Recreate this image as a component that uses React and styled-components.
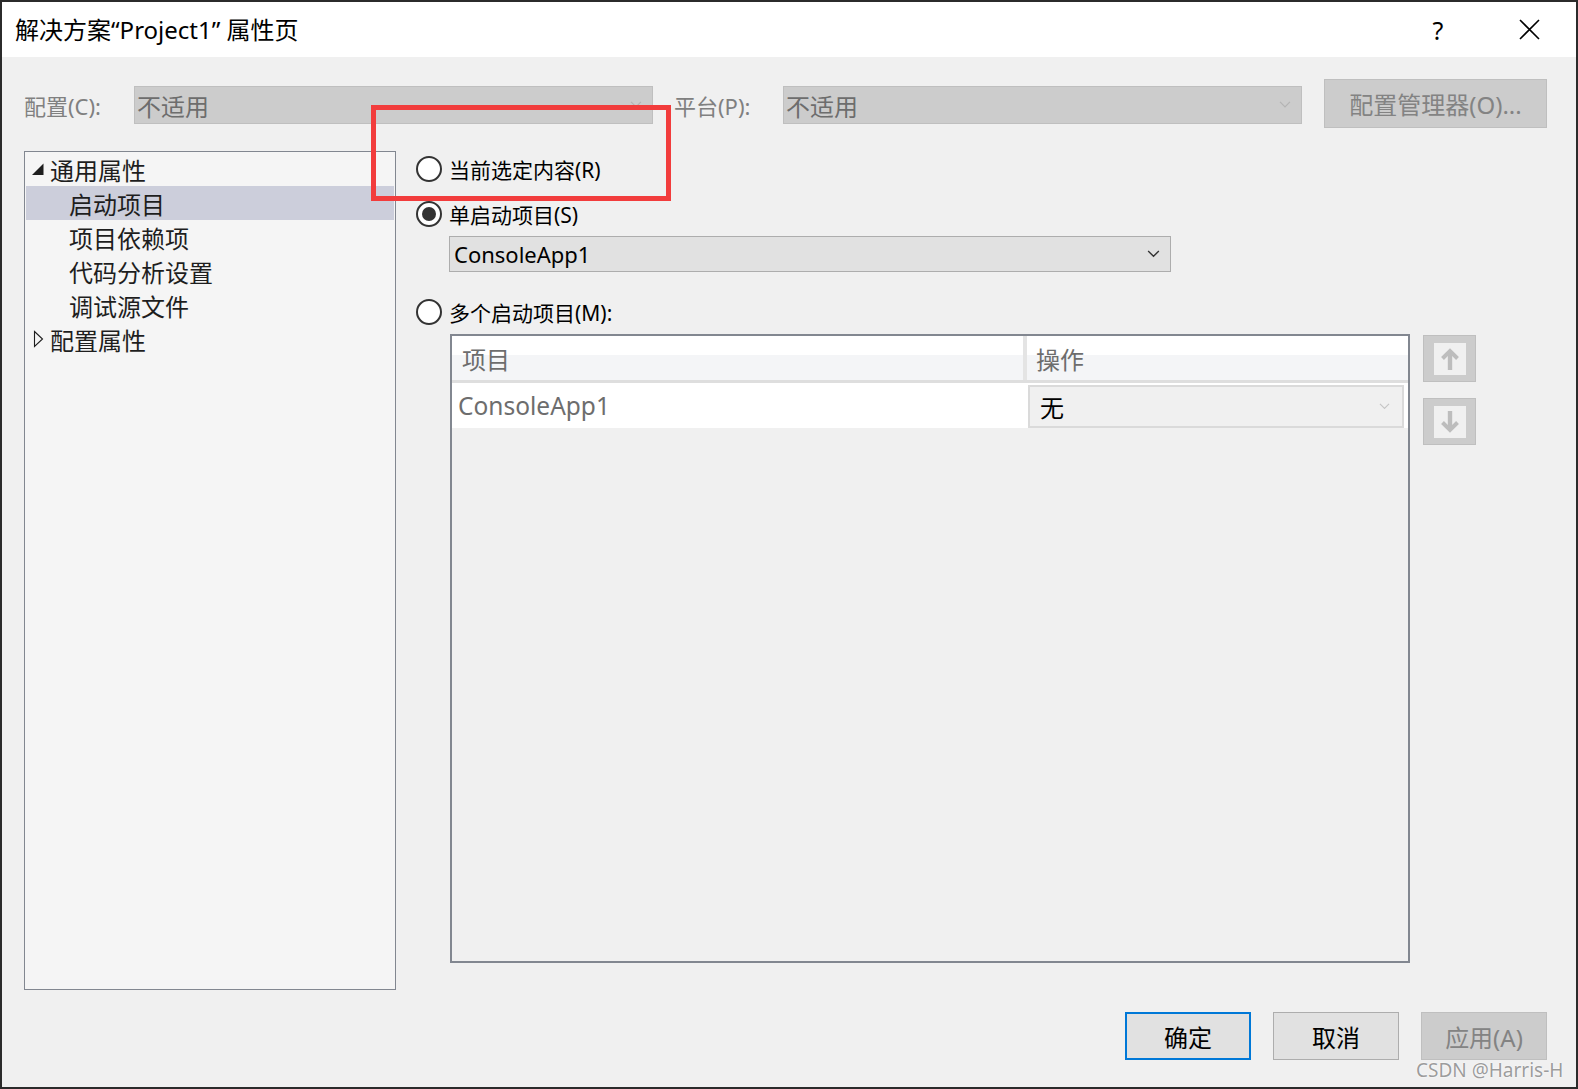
import React from 'react';
import styled, { createGlobalStyle } from 'styled-components';

const GlobalStyle = createGlobalStyle`
  html, body {
    margin: 0;
    padding: 0;
    background: #1f1f1f;
  }
  body {
    font-family: "Noto Sans", "Noto Sans CJK SC", sans-serif;
  }
  * {
    box-sizing: border-box;
  }
`;

const Window = styled.div`
  position: relative;
  width: 1578px;
  height: 1089px;
  border: 2px solid #2b2b2b;
  background: #f0f0f0;
  display: flex;
  flex-direction: column;
  overflow: hidden;
`;

const TitleBar = styled.div`
  height: 55px;
  flex-shrink: 0;
  background: #ffffff;
  display: flex;
  align-items: center;
  padding: 0 17px 0 13px;
`;

const TitleText = styled.div`
  font-size: 24px;
  line-height: 1;
  color: #000;
`;

const TitleActions = styled.div`
  margin-left: auto;
  display: flex;
  gap: 31px;
`;

const TitleAction = styled.div`
  width: 60px;
  height: 55px;
  display: flex;
  align-items: center;
  justify-content: center;
  font-size: 25px;
  color: #000;
`;

const Body = styled.div`
  flex: 1;
  display: flex;
  flex-direction: column;
  padding: 22px 29px 27px 22px;
`;

const Toolbar = styled.div`
  height: 49px;
  display: flex;
  align-items: flex-start;
`;

const FieldLabel = styled.div`
  width: ${p => p.$width}px;
  height: 38px;
  margin-top: 7px;
  margin-left: ${p => p.$gap || 0}px;
  display: flex;
  align-items: center;
  font-size: 22px;
  color: #808080;
`;

const ComboBox = styled.div`
  width: ${p => p.$width}px;
  height: ${p => p.$height}px;
  margin-top: ${p => p.$top || 0}px;
  margin-left: ${p => p.$left || 0}px;
  display: flex;
  align-items: center;
  justify-content: space-between;
  padding: 0 10px 0 ${p => p.$pad}px;
  border: 1px solid ${p => (p.$disabled ? '#bfbfbf' : '#adadad')};
  background: ${p => (p.$disabled ? '#cccccc' : '#e1e1e1')};
  color: ${p => (p.$disabled ? '#6d6d6d' : '#000')};
  font-size: ${p => p.$size}px;
`;

const ToolButton = styled.div`
  width: 223px;
  height: 49px;
  margin-left: 22px;
  display: flex;
  align-items: center;
  justify-content: center;
  background: #cccccc;
  border: 1px solid #bfbfbf;
  font-size: 24px;
  color: #838383;
`;

const Main = styled.div`
  margin-top: 23px;
  height: 839px;
  display: flex;
`;

const Tree = styled.div`
  width: 372px;
  height: 100%;
  background: #f5f5f5;
  border: 1px solid #828790;
  padding: 0 1px;
`;

const TreeRow = styled.div`
  height: 34px;
  display: flex;
  align-items: center;
  padding-left: ${p => p.$indent}px;
  background: ${p => (p.$selected ? '#cccedb' : 'transparent')};
  font-size: 24px;
  color: #1e1e1e;
`;

const Expander = styled.svg`
  width: 18px;
  height: 18px;
  flex-shrink: 0;
`;

const Pane = styled.div`
  flex: 1;
  margin-left: 20px;
  display: flex;
  flex-direction: column;
`;

const RadioRow = styled.div`
  height: 26px;
  margin-top: ${p => p.$top}px;
  display: flex;
  align-items: center;
`;

const Radio = styled.span`
  position: relative;
  width: 26px;
  height: 26px;
  border-radius: 50%;
  border: 2px solid #333;
  background: #fff;
  flex-shrink: 0;
  &::after {
    content: '';
    display: ${p => (p.$checked ? 'block' : 'none')};
    position: absolute;
    left: 4px;
    top: 4px;
    width: 14px;
    height: 14px;
    border-radius: 50%;
    background: #333;
  }
`;

const RadioLabel = styled.span`
  margin-left: 7px;
  font-size: 21px;
  color: #000;
`;

const GridArea = styled.div`
  margin: 9px 0 0 34px;
  display: flex;
  align-items: flex-start;
`;

const Grid = styled.div`
  width: 960px;
  height: 629px;
  border: 2px solid #828790;
  background: #f0f0f0;
`;

const HeaderRow = styled.div`
  display: grid;
  grid-template-columns: 571px 1fr;
  height: 47px;
  border-bottom: 3px solid #dedede;
  background: linear-gradient(#ffffff 0 19px, #f4f5f7 19px);
`;

const HeaderCell = styled.div`
  display: flex;
  align-items: center;
  padding-left: ${p => p.$pad}px;
  border-left: ${p => (p.$divider ? '4px solid #e4e4e4' : 'none')};
  font-size: 24px;
  color: #6d6d6d;
`;

const DataRow = styled.div`
  display: grid;
  grid-template-columns: 571px 1fr;
  height: 45px;
  background: #ffffff;
`;

const DataCell = styled.div`
  display: flex;
  align-items: center;
  padding: ${p => p.$padding};
  font-size: ${p => p.$size || 24}px;
  color: #6d6d6d;
`;

const CellCombo = styled.div`
  width: 100%;
  height: 43px;
  display: flex;
  align-items: center;
  justify-content: space-between;
  padding: 0 12px 0 10px;
  border: 2px solid #dadada;
  background: #f0f0f0;
  font-size: 24px;
  color: #000;
`;

const SideButtons = styled.div`
  margin: 1px 0 0 13px;
  display: flex;
  flex-direction: column;
  gap: 16px;
`;

const MoveButton = styled.div`
  width: 53px;
  height: 47px;
  display: flex;
  align-items: center;
  justify-content: center;
  background: #cccccc;
  border: 1px solid #bfbfbf;
`;

const MoveFace = styled.div`
  width: 32px;
  height: 32px;
  display: flex;
  align-items: center;
  justify-content: center;
  background: #f0f0f0;
`;

const Footer = styled.div`
  margin-top: 22px;
  display: flex;
  justify-content: flex-end;
  gap: 22px;
`;

const DialogButton = styled.div`
  width: 126px;
  height: 48px;
  display: flex;
  align-items: center;
  justify-content: center;
  font-size: 24px;
  background: ${p => (p.$disabled ? '#cccccc' : '#e1e1e1')};
  color: ${p => (p.$disabled ? '#838383' : '#000')};
  border: ${p =>
    p.$primary ? '2px solid #0078d7' : p.$disabled ? '1px solid #bfbfbf' : '1px solid #adadad'};
`;

const Highlight = styled.div`
  position: absolute;
  left: 369px;
  top: 103px;
  width: 300px;
  height: 96px;
  border: 5px solid #f23c3c;
  pointer-events: none;
`;

const Watermark = styled.div`
  position: absolute;
  left: 1414px;
  top: 1055px;
  font-size: 19px;
  color: #9c9c9c;
  text-shadow: 0 0 2px #ffffff, 0 0 1px #ffffff;
  pointer-events: none;
`;

const Chevron = ({ color = '#333', width = 13 }) => (
  <svg width={width} height={width * 0.6} viewBox="0 0 13 8" fill="none">
    <polyline points="1,1 6.5,6.5 12,1" stroke={color} strokeWidth="1.4" />
  </svg>
);

const Arrow = ({ down }) => (
  <svg width="18" height="22" viewBox="0 0 18 22" style={down ? { transform: 'rotate(180deg)' } : undefined}>
    <rect x="6.8" y="4" width="4.4" height="18" fill="#bdbdbd" />
    <polyline points="1.5,10.5 9,3 16.5,10.5" fill="none" stroke="#bdbdbd" strokeWidth="4" />
  </svg>
);

const treeItems = [
  { label: '通用属性', kind: 'open' },
  { label: '启动项目', child: true, selected: true },
  { label: '项目依赖项', child: true },
  { label: '代码分析设置', child: true },
  { label: '调试源文件', child: true },
  { label: '配置属性', kind: 'closed' },
];

const TreeItem = ({ label, kind, child, selected }) => (
  <TreeRow $indent={child ? 43 : 6} $selected={selected}>
    {kind === 'open' && (
      <Expander viewBox="0 0 18 18">
        <polygon points="11.5,3.5 11.5,15 0,15" fill="#1e1e1e" />
      </Expander>
    )}
    {kind === 'closed' && (
      <Expander viewBox="0 0 18 18">
        <polygon points="2.5,1.5 10.5,9 2.5,16.5" fill="none" stroke="#1e1e1e" strokeWidth="1.1" />
      </Expander>
    )}
    {label}
  </TreeRow>
);

export default function App() {
  return (
    <>
      <GlobalStyle />
      <Window>
        <TitleBar>
          <TitleText>解决方案“Project1” 属性页</TitleText>
          <TitleActions>
            <TitleAction>?</TitleAction>
            <TitleAction>
              <svg width="21" height="21" viewBox="0 0 21 21">
                <path d="M1 1 L20 20 M20 1 L1 20" stroke="#000" strokeWidth="1.6" />
              </svg>
            </TitleAction>
          </TitleActions>
        </TitleBar>

        <Body>
          <Toolbar>
            <FieldLabel $width={110}>配置(C):</FieldLabel>
            <ComboBox $disabled $width={519} $height={38} $top={7} $pad={2} $size={24}>
              <span>不适用</span>
              <Chevron color="#b4b4b4" width={12} />
            </ComboBox>
            <FieldLabel $width={109} $gap={21}>平台(P):</FieldLabel>
            <ComboBox $disabled $width={519} $height={38} $top={7} $pad={2} $size={24}>
              <span>不适用</span>
              <Chevron color="#b4b4b4" width={12} />
            </ComboBox>
            <ToolButton>配置管理器(O)...</ToolButton>
          </Toolbar>

          <Main>
            <Tree>
              {treeItems.map(item => (
                <TreeItem key={item.label} {...item} />
              ))}
            </Tree>

            <Pane>
              <RadioRow $top={5}>
                <Radio />
                <RadioLabel>当前选定内容(R)</RadioLabel>
              </RadioRow>
              <RadioRow $top={19}>
                <Radio $checked />
                <RadioLabel>单启动项目(S)</RadioLabel>
              </RadioRow>
              <ComboBox $width={722} $height={36} $top={9} $left={33} $pad={4} $size={22}>
                <span>ConsoleApp1</span>
                <Chevron color="#333" width={13} />
              </ComboBox>
              <RadioRow $top={27}>
                <Radio />
                <RadioLabel>多个启动项目(M):</RadioLabel>
              </RadioRow>

              <GridArea>
                <Grid>
                  <HeaderRow>
                    <HeaderCell $pad={10}>项目</HeaderCell>
                    <HeaderCell $pad={9} $divider>操作</HeaderCell>
                  </HeaderRow>
                  <DataRow>
                    <DataCell $padding="0 0 0 6px" $size={24.5}>ConsoleApp1</DataCell>
                    <DataCell $padding="1px 4px 0 5px">
                      <CellCombo>
                        <span>无</span>
                        <Chevron color="#c4c4c4" width={11} />
                      </CellCombo>
                    </DataCell>
                  </DataRow>
                </Grid>
                <SideButtons>
                  <MoveButton>
                    <MoveFace>
                      <Arrow />
                    </MoveFace>
                  </MoveButton>
                  <MoveButton>
                    <MoveFace>
                      <Arrow down />
                    </MoveFace>
                  </MoveButton>
                </SideButtons>
              </GridArea>
            </Pane>
          </Main>

          <Footer>
            <DialogButton $primary>确定</DialogButton>
            <DialogButton>取消</DialogButton>
            <DialogButton $disabled>应用(A)</DialogButton>
          </Footer>
        </Body>

        <Highlight />
        <Watermark>CSDN @Harris-H</Watermark>
      </Window>
    </>
  );
}
